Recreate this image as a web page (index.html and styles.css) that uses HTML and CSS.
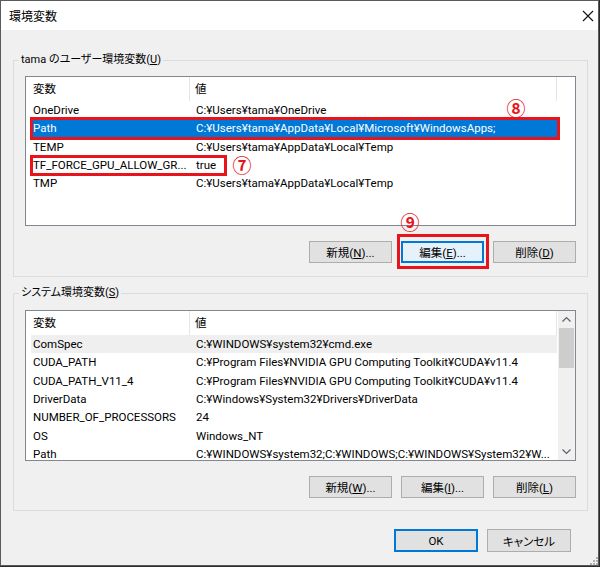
FILE: index.html
```html
<!DOCTYPE html>
<html lang="ja">

<head>
    <meta charset="UTF-8">
    <title>環境変数</title>
    <link rel="stylesheet" href="styles.css">
</head>

<body>
    <div class="window">
        <div class="titlebar">
            <span>環境変数</span>
            <svg class="close" width="12" height="12" viewBox="0 0 12 12">
                <path d="M1 1 L11 11 M11 1 L1 11" stroke="#111" stroke-width="1.1" fill="none" />
            </svg>
        </div>

        <div class="content">
            <div class="group">
                <div class="group-title">tama のユーザー環境変数(<u>U</u>)</div>
                <div class="list list-user">
                    <div class="list-body">
                        <div class="list-head">
                            <div class="h1">変数</div>
                            <div class="h2">値</div>
                        </div>
                        <div class="row"><div class="c1">OneDrive</div><div class="c2">C:¥Users¥tama¥OneDrive</div></div>
                        <div class="row selected"><div class="c1">Path</div><div class="c2">C:¥Users¥tama¥AppData¥Local¥Microsoft¥WindowsApps;</div></div>
                        <div class="row"><div class="c1">TEMP</div><div class="c2">C:¥Users¥tama¥AppData¥Local¥Temp</div></div>
                        <div class="row"><div class="c1">TF_FORCE_GPU_ALLOW_GR...</div><div class="c2">true</div></div>
                        <div class="row"><div class="c1">TMP</div><div class="c2">C:¥Users¥tama¥AppData¥Local¥Temp</div></div>
                    </div>
                </div>
                <div class="btn-row">
                    <button class="btn">新規(<u>N</u>)...</button>
                    <button class="btn focused">編集(<u>E</u>)...</button>
                    <button class="btn">削除(<u>D</u>)</button>
                </div>
            </div>

            <div class="group group-system">
                <div class="group-title">システム環境変数(<u>S</u>)</div>
                <div class="list list-system">
                    <div class="list-body">
                        <div class="list-head">
                            <div class="h1">変数</div>
                            <div class="h2">値</div>
                        </div>
                        <div class="row hover"><div class="c1">ComSpec</div><div class="c2">C:¥WINDOWS¥system32¥cmd.exe</div></div>
                        <div class="row"><div class="c1">CUDA_PATH</div><div class="c2">C:¥Program Files¥NVIDIA GPU Computing Toolkit¥CUDA¥v11.4</div></div>
                        <div class="row"><div class="c1">CUDA_PATH_V11_4</div><div class="c2">C:¥Program Files¥NVIDIA GPU Computing Toolkit¥CUDA¥v11.4</div></div>
                        <div class="row"><div class="c1">DriverData</div><div class="c2">C:¥Windows¥System32¥Drivers¥DriverData</div></div>
                        <div class="row"><div class="c1">NUMBER_OF_PROCESSORS</div><div class="c2">24</div></div>
                        <div class="row"><div class="c1">OS</div><div class="c2">Windows_NT</div></div>
                        <div class="row"><div class="c1">Path</div><div class="c2">C:¥WINDOWS¥system32;C:¥WINDOWS;C:¥WINDOWS¥System32¥W...</div></div>
                    </div>
                    <div class="scrollbar">
                        <svg class="arrow" width="17" height="17" viewBox="0 0 17 17">
                            <path d="M4.5 10.5 L8.5 6.5 L12.5 10.5" stroke="#606060" stroke-width="1.2" fill="none" />
                        </svg>
                        <div class="track"><div class="thumb"></div></div>
                        <svg class="arrow" width="17" height="17" viewBox="0 0 17 17">
                            <path d="M4.5 6.5 L8.5 10.5 L12.5 6.5" stroke="#606060" stroke-width="1.2" fill="none" />
                        </svg>
                    </div>
                </div>
                <div class="btn-row">
                    <button class="btn">新規(<u>W</u>)...</button>
                    <button class="btn">編集(<u>I</u>)...</button>
                    <button class="btn">削除(<u>L</u>)</button>
                </div>
            </div>

            <div class="footer">
                <button class="btn default">OK</button>
                <button class="btn">キャンセル</button>
            </div>
        </div>

        <!-- annotations drawn over the dialog -->
        <div class="mark mark-path"></div>
        <div class="mark mark-tf"></div>
        <div class="mark mark-edit"></div>
        <span class="num num7">⑦</span>
        <span class="num num8">⑧</span>
        <span class="num num9">⑨</span>

        <svg class="grip" width="10" height="10" viewBox="0 0 10 10">
            <rect x="8" y="2" width="2" height="2" fill="#b0b0b0" />
            <rect x="5" y="5" width="2" height="2" fill="#b0b0b0" />
            <rect x="8" y="5" width="2" height="2" fill="#b0b0b0" />
            <rect x="2" y="8" width="2" height="2" fill="#b0b0b0" />
            <rect x="5" y="8" width="2" height="2" fill="#b0b0b0" />
            <rect x="8" y="8" width="2" height="2" fill="#b0b0b0" />
        </svg>
    </div>
</body>

</html>
```

FILE: styles.css
```css
* {
    margin: 0;
    padding: 0;
    box-sizing: border-box;
}

body {
    background-color: #2b2b2b;
    font-family: Roboto, "Noto Sans CJK JP", sans-serif;
    font-size: 11.5px;
    color: #000;
}

.window {
    position: relative;
    width: 599px;
    height: 566px;
    border: 1px solid #5a5a5a;
    background-color: #f0f0f0;
    display: flex;
    flex-direction: column;
}

.titlebar {
    height: 29px;
    background-color: #fff;
    display: flex;
    align-items: center;
    justify-content: space-between;
    padding: 0 4px 0 8px;
    font-size: 12px;
}

.content {
    padding: 30px 0 0 12px;
    display: flex;
    flex-direction: column;
}

.group {
    width: 575px;
    border: 1px solid #dcdcdc;
    padding: 0 11px 13px 11px;
    display: flex;
    flex-direction: column;
}

.group-system {
    margin-top: 16px;
    padding-bottom: 12px;
}

.group-title {
    align-self: flex-start;
    height: 16px;
    line-height: 16px;
    margin: -9px 0 0 -6px;
    padding: 0 2px;
    background-color: #f0f0f0;
    font-size: 11px;
    font-feature-settings: "palt";
}

.list {
    display: flex;
    margin-top: 8px;
    height: 150px;
    background-color: #fff;
    border: 1px solid #828790;
    overflow: hidden;
}

.list-system {
    margin-top: 9px;
    height: 151px;
}

.list-body {
    flex: 1;
    overflow: hidden;
}

.list-head {
    display: flex;
    height: 24px;
    line-height: 24px;
}

.list-head .h1 {
    width: 164px;
    padding-left: 7px;
    border-right: 1px solid #e5e5e5;
}

.list-head .h2 {
    width: 367px;
    padding-left: 5px;
    border-right: 1px solid #e5e5e5;
}

.row {
    display: flex;
    height: 18.33px;
    line-height: 18.33px;
    margin-left: 5px;
    width: 526px;
    white-space: nowrap;
}

.row .c1 {
    width: 159px;
    padding-left: 2px;
    overflow: hidden;
}

.row .c2 {
    flex: 1;
    padding-left: 6px;
    overflow: hidden;
}

.row.selected {
    background-color: #0078d7;
    color: #fff;
}

.row.hover {
    background-color: #efefef;
}

.scrollbar {
    width: 17px;
    background-color: #f0f0f0;
    display: flex;
    flex-direction: column;
}

.scrollbar .arrow {
    display: block;
}

.track {
    flex: 1;
}

.thumb {
    height: 40px;
    margin: 0 1px;
    background-color: #cdcdcd;
}

.btn-row {
    display: flex;
    justify-content: flex-end;
    gap: 9px;
    margin-top: 15px;
}

.btn {
    width: 83px;
    height: 22px;
    font-family: Roboto, "Noto Sans CJK JP", sans-serif;
    font-size: 11.5px;
    font-feature-settings: "palt";
    color: #000;
    background-color: #e1e1e1;
    border: 1px solid #adadad;
}

.btn.focused {
    background-color: #e5f1fb;
    border: 2px solid #0078d7;
}

.btn.default {
    border: 2px solid #0078d7;
}

.footer {
    display: flex;
    justify-content: flex-end;
    gap: 9px;
    width: 575px;
    padding-right: 17px;
    margin-top: 18px;
}

.footer .btn {
    height: 23px;
    width: 84px;
}

/* red annotation boxes */
.mark {
    position: absolute;
    border: 3px solid #e8141c;
}

.mark-path {
    left: 29px;
    top: 116px;
    width: 530px;
    height: 23px;
}

.mark-tf {
    left: 29px;
    top: 154px;
    width: 197px;
    height: 21px;
}

.mark-edit {
    left: 396px;
    top: 233px;
    width: 92px;
    height: 35px;
}

.num {
    position: absolute;
    width: 20px;
    height: 20px;
    line-height: 20px;
    text-align: center;
    font-family: "Noto Sans CJK JP", sans-serif;
    font-size: 19px;
    font-weight: bold;
    color: #e8141c;
}

.num7 {
    left: 231px;
    top: 154px;
}

.num8 {
    left: 505px;
    top: 97px;
}

.num9 {
    left: 399px;
    top: 211px;
}

.grip {
    position: absolute;
    left: 587px;
    top: 554px;
}
```
